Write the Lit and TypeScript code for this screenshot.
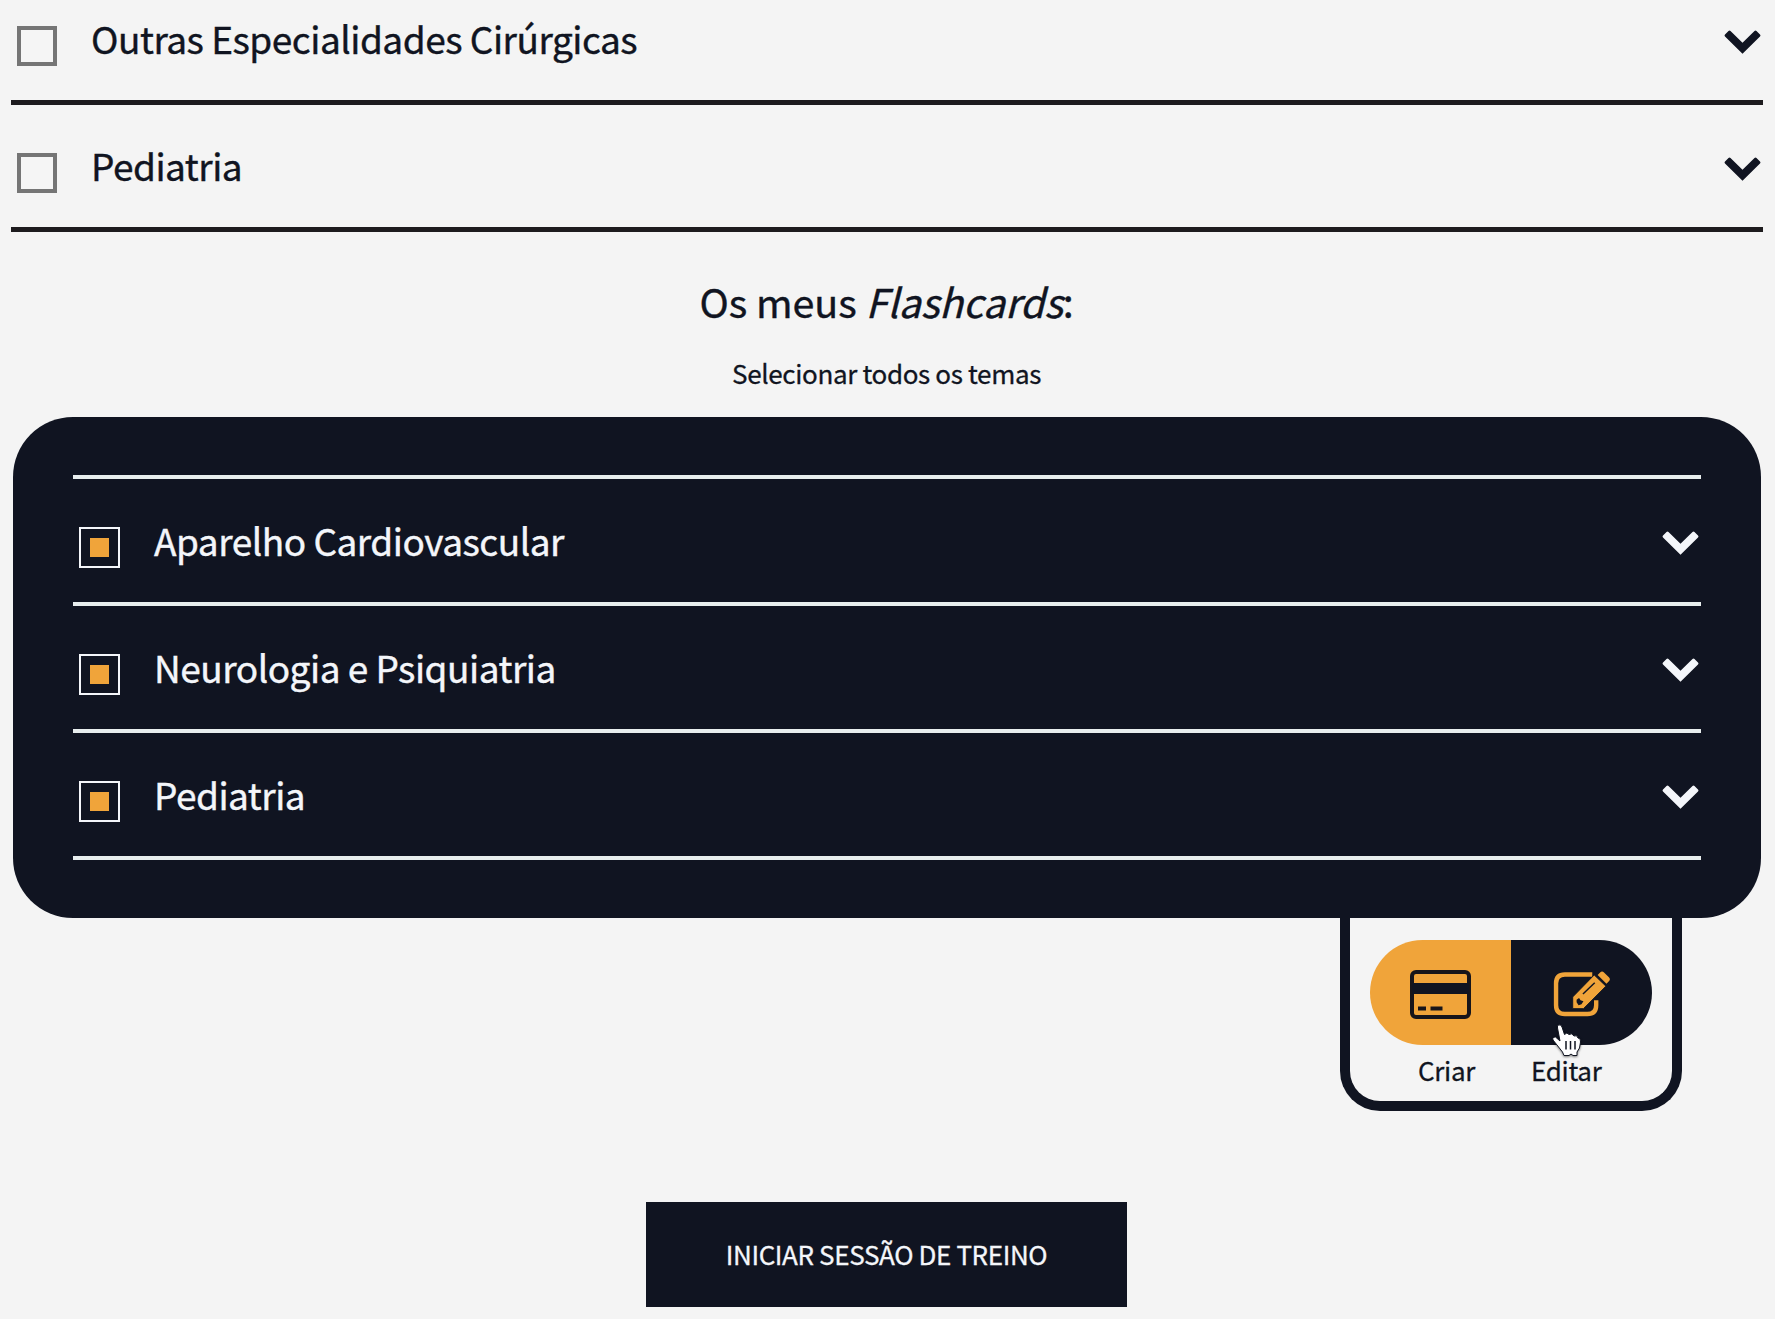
import { LitElement, html, css, svg } from "lit";
import { customElement, property } from "lit/decorators.js";

@customElement("topic-row")
class TopicRow extends LitElement {
  @property() label = "";
  @property({ type: Boolean, reflect: true }) checked = false;

  static styles = css`
    :host {
      display: flex;
      box-sizing: border-box;
      height: 127px;
      padding: 48px 2px 0 6px;
      border-bottom: var(--rule, 5px) solid currentColor;
    }
    .box {
      box-sizing: border-box;
      flex: none;
      width: 40px;
      height: 40px;
      border: 4px solid #757575;
      background: #f5f5f5;
    }
    :host([checked]) .box {
      width: 41px;
      height: 41px;
      border: 2px solid #f4f6fa;
      background: #101421;
      padding: 9px;
    }
    .fill {
      display: none;
      width: 19px;
      height: 19px;
      background: #f0a43a;
    }
    :host([checked]) .fill {
      display: block;
    }
    .label {
      flex: 1;
      margin: -15px 0 0 34px;
      font-size: 37px;
      line-height: 54px;
      letter-spacing: -0.49px;
      -webkit-text-stroke: 0.4px currentColor;
      white-space: nowrap;
      color: var(--label, #101421);
    }
    :host([checked]) .label {
      margin-top: -14px;
    }
    .chevron {
      flex: none;
      display: block;
      width: 37px;
      height: 24px;
      margin-top: 4px;
      color: var(--label, #101421);
    }
  `;

  render() {
    return html`
      <div class="box"><div class="fill"></div></div>
      <span class="label">${this.label}</span>
      <svg class="chevron" viewBox="0 0 37 24">
        <path d="M18.5 23.8 1 6.400Q0 5.400 1 4.400L4.500 1Q5.500 0 6.500 1L18.500 12.800 30.500 1Q31.500 0 32.500 1L36 4.400Q37 5.400 36 6.400Z" fill="currentColor" />
      </svg>
    `;
  }
}

const cardIcon = svg`
  <svg class="card" viewBox="0 0 61 49">
    <rect x="2" y="2" width="57" height="45" rx="4" fill="none" stroke="#17151a" stroke-width="4" />
    <rect x="2" y="13" width="57" height="11" fill="#101421" />
    <path d="M8 38.500H16M20.500 38.500H32.500" stroke="#17151a" stroke-width="4" />
  </svg>`;

const editIcon = svg`
  <svg class="edit" viewBox="0 0 58 47">
    <path d="M40 3.500H12Q3 3.500 3 12.500V35Q3 44 12 44H35Q44 44 44 35V30" fill="none" stroke="#f0a43a" stroke-width="4.500" />
    <path d="M20 26.500 42 4 54 15.500 31 38.500H20Z" fill="#f0a43a" stroke="#101421" stroke-width="1" />
    <path d="M45.500 4 48 1.500Q50-.5 52 1.500L57 6.500Q59 8.500 57 10.500L54.500 13Z" fill="#f0a43a" />
    <path d="M30.500 23.500 42.500 12" stroke="#101421" stroke-width="1.500" />
    <path d="M24 29.500 26.500 27.500 28 30 31 31 29 34 26 35 24 32Z" fill="#101421" />
  </svg>`;

@customElement("app-root")
class AppRoot extends LitElement {
  static styles = css`
    :host {
      display: flex;
      flex-direction: column;
      box-sizing: border-box;
      height: 1319px;
      overflow: hidden;
      background: #f4f4f4;
      color: #101421;
      font-family: "Noto Sans CJK SC", "Noto Sans", sans-serif;
    }
    .topics {
      margin: -22px 12px 0 11px;
      color: #1d1b1e;
    }
    .title {
      margin: 45px 2px 0 0;
      text-align: center;
      font-size: 39.5px;
      line-height: 48px;
      font-weight: 400;
      letter-spacing: -0.04px;
      -webkit-text-stroke: 0.4px currentColor;
    }
    .all {
      margin: 30px 2px 0 0;
      text-align: center;
      font-size: 26px;
      line-height: 36px;
      letter-spacing: -0.35px;
      -webkit-text-stroke: 0.3px currentColor;
    }
    .panel {
      box-sizing: border-box;
      height: 501px;
      margin: 26px 14px 0 13px;
      padding: 58px 60px 0;
      border-radius: 60px;
      background: #101421;
      --label: #f4f6fa;
      --rule: 4px;
    }
    .mine {
      border-top: 4px solid #e8eeee;
      color: #e8eeee;
    }
    .tools {
      align-self: flex-end;
      box-sizing: border-box;
      width: 342px;
      height: 193px;
      margin-right: 93px;
      padding: 22px 20px 0;
      border: 10px solid #101421;
      border-top: 0;
      border-radius: 0 0 40px 40px;
    }
    .pill {
      display: flex;
      height: 105px;
      border-radius: 53px;
      overflow: hidden;
    }
    .half {
      flex: 1;
      display: flex;
      align-items: center;
      justify-content: center;
      background: #f0a43a;
    }
    .dark {
      background: #101421;
    }
    .card {
      width: 61px;
      height: 49px;
      margin-top: 4px;
    }
    .edit {
      width: 57px;
      height: 46px;
      margin: 3px 1px 0 0;
    }
    .captions {
      display: flex;
      gap: 56px;
      padding-left: 48px;
      margin-top: 7px;
      font-size: 26px;
      line-height: 36px;
      letter-spacing: -0.3px;
      -webkit-text-stroke: 0.3px currentColor;
    }
    .cursor {
      position: absolute;
      left: 1551px;
      top: 1024px;
      width: 32px;
      height: 34px;
      filter: drop-shadow(0 1px 1px rgb(0 0 0 / 0.5));
    }
    .start {
      align-self: center;
      width: 481px;
      height: 105px;
      margin: 91px 2px 0 0;
      padding: 0 0 2px;
      border: 0;
      background: #101421;
      color: #f4f6fa;
      font: 400 26px/36px "Noto Sans CJK SC", "Noto Sans", sans-serif;
      letter-spacing: -0.38px;
      -webkit-text-stroke: 0.3px currentColor;
    }
  `;

  render() {
    return html`
      <div class="topics">
        <topic-row label="Outras Especialidades Cirúrgicas"></topic-row>
        <topic-row label="Pediatria"></topic-row>
      </div>
      <h2 class="title">Os meus <em>Flashcards</em>:</h2>
      <div class="all">Selecionar todos os temas</div>
      <div class="panel">
        <div class="mine">
          <topic-row checked label="Aparelho Cardiovascular"></topic-row>
          <topic-row checked label="Neurologia e Psiquiatria"></topic-row>
          <topic-row checked label="Pediatria"></topic-row>
        </div>
      </div>
      <div class="tools">
        <div class="pill">
          <div class="half">${cardIcon}</div>
          <div class="half dark">${editIcon}</div>
        </div>
        <div class="captions"><span>Criar</span><span>Editar</span></div>
      </div>
      <button class="start">INICIAR SESSÃO DE TREINO</button>
      <svg class="cursor" viewBox="0 0 32 34">
        <path d="M7.500 1Q10 0 11 3L13.500 10.500Q16 7.500 18 10.500 21 8.500 23 12 26 10.500 27 14 30 14 29.500 18L28.500 24 26 28V31.500H22L20 30 18 31.500H13L11.500 28 6 21 2 16Q1 13 4.500 13L9 17 6.500 4Q6 1.500 7.500 1Z" fill="#fff" stroke="#101421" stroke-width="1" />
        <path d="M15 17V25.500M19.500 17V25.500M24 17V25.500" stroke="#101421" stroke-width="1.500" />
      </svg>
    `;
  }
}
